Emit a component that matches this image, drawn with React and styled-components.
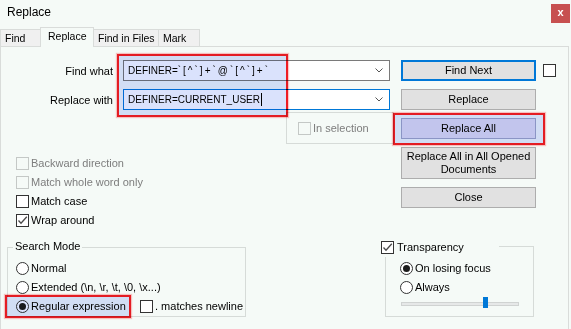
import React from 'react'
import styled, { createGlobalStyle } from 'styled-components'

const GlobalStyle = createGlobalStyle`
    html, body {
        margin: 0;
        padding: 0;
        background: #f5faf7;
    }
    body {
        font-family: "Liberation Sans", Arial, sans-serif;
        font-size: 11px;
        color: #000;
    }
`

const Window = styled.div`
    width: 571px;
    height: 329px;
    background: #f5faf7;
    overflow: hidden;
    display: flex;
    flex-direction: column;
`

const TitleBar = styled.div`
    height: 27px;
    display: flex;
    justify-content: space-between;
    align-items: flex-start;
`

const Title = styled.div`
    padding: 6px 0 0 7px;
    font-size: 12px;
    line-height: 13px;
`

const CloseX = styled.div`
    width: 19px;
    height: 19px;
    margin: 4px 1px 0 0;
    background: #c75050;
    color: #fff;
    font-weight: bold;
    font-size: 11px;
    line-height: 17px;
    text-align: center;
`

const TabStrip = styled.div`
    height: 19px;
    display: flex;
    align-items: flex-end;
`

const Tab = styled.div`
    position: relative;
    z-index: ${p => (p.$active ? 1 : 0)};
    width: ${p => p.$w}px;
    height: ${p => (p.$active ? 20 : 17)}px;
    margin-bottom: ${p => (p.$active ? -1 : 0)}px;
    margin-left: ${p => (p.$first ? 0 : -1)}px;
    box-sizing: border-box;
    border: 1px solid #d9dcda;
    border-bottom: none;
    background: ${p => (p.$active ? '#f5faf7' : '#f0f0f0')};
    padding-left: ${p => (p.$active ? 7 : 4)}px;
    font-size: 10.5px;
    line-height: ${p => (p.$active ? 16 : 16)}px;
    white-space: nowrap;
`

const Panel = styled.div`
    flex: 1;
    width: 569px;
    box-sizing: border-box;
    border: 1px solid #d9dcda;
    border-bottom: none;
    display: flex;
    flex-direction: column;
`

const TopRow = styled.div`
    display: flex;
    padding-top: 13px;
`

const LeftCol = styled.div`
    width: 400px;
    display: flex;
    flex-direction: column;
`

const Fields = styled.div`
    position: relative;
    display: grid;
    grid-template-columns: 112px 267px;
    column-gap: 10px;
    row-gap: 8px;
    align-items: center;
`

const FieldLabel = styled.div`
    text-align: right;
    white-space: nowrap;
`

const Combo = styled.div`
    height: 21px;
    box-sizing: border-box;
    border: 1px solid ${p => (p.$focused ? '#0078d7' : '#7a7a7a')};
    background: #fff;
    display: flex;
    align-items: center;
    padding: 0 6px 0 4px;
    font-size: 10px;
`

const ComboText = styled.div`
    flex: 1;
    white-space: nowrap;
    overflow: hidden;
    display: flex;
    align-items: center;
`

const Wide = styled.span`
    letter-spacing: 2px;
`

const Caret = styled.span`
    display: inline-block;
    width: 1px;
    height: 13px;
    background: #000;
    margin-left: 1px;
`

const Mark = styled.div`
    position: absolute;
    left: ${p => p.$left}px;
    top: ${p => p.$top}px;
    width: ${p => p.$w}px;
    height: ${p => p.$h}px;
    box-sizing: border-box;
    border: 2px solid #ee1c24;
    box-shadow: 0 0 1px 1px rgba(255, 90, 90, 0.35);
    background: rgb(218, 226, 252);
    mix-blend-mode: multiply;
    pointer-events: none;
    z-index: 2;
`

const SelectionBox = styled.div`
    margin: 2px 0 0 285px;
    width: 108px;
    height: 32px;
    box-sizing: border-box;
    border: 1px solid #d6dbd8;
    display: flex;
    align-items: center;
    padding-left: 11px;
`

const CheckList = styled.div`
    margin-top: 13px;
    padding-left: 15px;
    display: flex;
    flex-direction: column;
    gap: 6px;
`

const Option = styled.div`
    position: relative;
    display: flex;
    align-items: center;
    gap: 2px;
    height: 13px;
    line-height: 13px;
    white-space: nowrap;
    width: ${p => (p.$w ? `${p.$w}px` : 'auto')};
    color: ${p => (p.$disabled ? '#7d7d7d' : '#000')};
`

const Box = styled.span`
    width: 13px;
    height: 13px;
    box-sizing: border-box;
    flex-shrink: 0;
    border: 1px solid ${p => (p.$disabled ? '#c4c8c6' : '#333')};
    background: ${p => (p.$disabled ? 'transparent' : '#fff')};
    display: inline-flex;
    align-items: center;
    justify-content: center;
`

const Circle = styled.span`
    width: 13px;
    height: 13px;
    box-sizing: border-box;
    flex-shrink: 0;
    border-radius: 50%;
    border: 1px solid #333;
    background: #fff;
    display: inline-flex;
    align-items: center;
    justify-content: center;

    &::after {
        content: '';
        display: ${p => (p.$on ? 'block' : 'none')};
        width: 7px;
        height: 7px;
        border-radius: 50%;
        background: #1c1c1c;
    }
`

const ButtonStack = styled.div`
    display: flex;
    flex-direction: column;
    gap: 8px;
`

const ButtonRow = styled.div`
    position: relative;
    display: flex;
    align-items: center;
    gap: 7px;
`

const Button = styled.div`
    width: 135px;
    height: ${p => (p.$tall ? 32 : 21)}px;
    box-sizing: border-box;
    border: ${p => (p.$default ? '2px solid #0078d7' : p.$hot ? '1px solid #a3a8c8' : '1px solid #adadad')};
    background: ${p => (p.$hot ? '#e3dff0' : '#e1e1e1')};
    display: flex;
    align-items: center;
    justify-content: center;
    text-align: center;
    line-height: 13px;
    padding: 0 3px;
`

const BottomRow = styled.div`
    display: flex;
    align-items: flex-start;
    padding-top: 19px;
`

const Group = styled.div`
    position: relative;
    margin-left: ${p => p.$ml}px;
    margin-top: ${p => p.$mt}px;
    width: ${p => p.$w}px;
    height: ${p => p.$h}px;
    box-sizing: border-box;
    border: 1px solid #d6dbd8;
    padding: ${p => p.$pad};
    display: flex;
    flex-direction: column;
    gap: 6px;
`

const Legend = styled.div`
    position: absolute;
    left: ${p => p.$left}px;
    top: ${p => p.$top}px;
    width: ${p => (p.$w ? `${p.$w}px` : 'auto')};
    height: ${p => p.$h}px;
    background: #f5faf7;
    padding: 0 2px;
    display: flex;
    align-items: flex-start;
    gap: 3px;
    line-height: 13px;
    white-space: nowrap;
`

const Slider = styled.div`
    position: relative;
    width: 118px;
    height: 11px;
    margin: -3px 0 0 1px;
`

const Track = styled.div`
    margin-top: 5px;
    height: 4px;
    box-sizing: border-box;
    border: 1px solid #d0d3d2;
    background: #e6e8e8;
`

const Thumb = styled.div`
    position: absolute;
    left: 82px;
    top: 0;
    width: 5px;
    height: 11px;
    background: #0078d7;
`

const Chevron = () => (
    <svg width="8" height="5" viewBox="0 0 8 5">
        <polyline points="0.5,0.5 4,4 7.5,0.5" fill="none" stroke="#555" strokeWidth="1" />
    </svg>
)

const Tick = () => (
    <svg width="11" height="11" viewBox="0 0 11 11">
        <path d="M1.5 5.5 L4 8.2 L9.8 1.8" fill="none" stroke="#4a4a4a" strokeWidth="1.3" />
    </svg>
)

const Check = ({ checked, disabled, children, ...rest }) => (
    <Option $disabled={disabled} {...rest}>
        <Box $disabled={disabled}>{checked && <Tick />}</Box>
        {children}
    </Option>
)

const Radio = ({ on, children, ...rest }) => (
    <Option {...rest}>
        <Circle $on={on} />
        {children}
    </Option>
)

const tabs = [
    { label: 'Find', w: 41 },
    { label: 'Replace', w: 54, active: true },
    { label: 'Find in Files', w: 66 },
    { label: 'Mark', w: 42 },
]

export default function App() {
    return (
        <Window>
            <GlobalStyle />
            <TitleBar>
                <Title>Replace</Title>
                <CloseX>x</CloseX>
            </TitleBar>
            <TabStrip>
                {tabs.map((t, i) => (
                    <Tab key={t.label} $w={t.w} $active={t.active} $first={i === 0}>
                        {t.label}
                    </Tab>
                ))}
            </TabStrip>
            <Panel>
                <TopRow>
                    <LeftCol>
                        <Fields>
                            <FieldLabel>Find what</FieldLabel>
                            <Combo>
                                <ComboText>
                                    <span>DEFINER=</span>
                                    <Wide>`[^`]+`@`[^`]+`</Wide>
                                </ComboText>
                                <Chevron />
                            </Combo>
                            <FieldLabel>Replace with</FieldLabel>
                            <Combo $focused>
                                <ComboText>
                                    DEFINER=CURRENT_USER
                                    <Caret />
                                </ComboText>
                                <Chevron />
                            </Combo>
                            <Mark $left={116} $top={-6} $w={171} $h={63} />
                        </Fields>
                        <SelectionBox>
                            <Check disabled>In selection</Check>
                        </SelectionBox>
                        <CheckList>
                            <Check disabled>Backward direction</Check>
                            <Check disabled>Match whole word only</Check>
                            <Check>Match case</Check>
                            <Check checked>Wrap around</Check>
                        </CheckList>
                    </LeftCol>
                    <ButtonStack>
                        <ButtonRow>
                            <Button $default>Find Next</Button>
                            <Box />
                        </ButtonRow>
                        <ButtonRow>
                            <Button>Replace</Button>
                        </ButtonRow>
                        <ButtonRow>
                            <Button $hot>Replace All</Button>
                            <Mark $left={-8} $top={-5} $w={152} $h={32} />
                        </ButtonRow>
                        <ButtonRow>
                            <Button $tall>Replace All in All Opened Documents</Button>
                        </ButtonRow>
                        <ButtonRow>
                            <Button>Close</Button>
                        </ButtonRow>
                    </ButtonStack>
                </TopRow>
                <BottomRow>
                    <Group $ml={6} $mt={1} $w={239} $h={70} $pad="14px 0 0 8px">
                        <Legend $left={5} $top={-8} $h={13}>Search Mode</Legend>
                        <Radio>Normal</Radio>
                        <Radio>Extended (\n, \r, \t, \0, \x...)</Radio>
                        <Option>
                            <Radio on $w={122}>
                                Regular expression
                                <Mark $left={-11} $top={-5} $w={126} $h={23} />
                            </Radio>
                            <Check>. matches newline</Check>
                        </Option>
                    </Group>
                    <Group $ml={139} $mt={0} $w={149} $h={71} $pad="15px 0 0 14px">
                        <Legend $left={-7} $top={-6} $w={116} $h={16}>
                            <Box><Tick /></Box>
                            Transparency
                        </Legend>
                        <Radio on>On losing focus</Radio>
                        <Radio>Always</Radio>
                        <Slider>
                            <Track />
                            <Thumb />
                        </Slider>
                    </Group>
                </BottomRow>
            </Panel>
        </Window>
    )
}
